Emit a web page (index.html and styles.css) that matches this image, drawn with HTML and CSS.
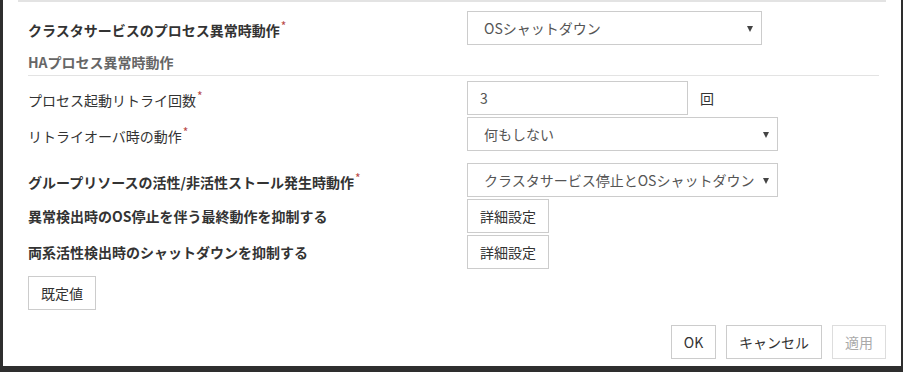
FILE: index.html
```html
<!DOCTYPE html>
<html lang="ja">
<head>
    <meta charset="UTF-8">
    <title>クラスタプロパティ - 監視</title>
    <link rel="stylesheet" href="styles.css">
</head>
<body>
    <div class="dialog">
        <div class="top-rule"></div>

        <div class="form">
            <div class="row">
                <label class="label bold">クラスタサービスのプロセス異常時動作<span class="req">*</span></label>
                <div class="select-wrap w295">
                    <select class="select">
                        <option>OSシャットダウン</option>
                    </select>
                </div>
            </div>

            <div class="section-title">HAプロセス異常時動作</div>

            <div class="row gap-sm">
                <label class="label">プロセス起動リトライ回数<span class="req">*</span></label>
                <div class="control-line">
                    <input class="input" type="text" value="3">
                    <span class="unit">回</span>
                </div>
            </div>

            <div class="row gap-lg">
                <label class="label">リトライオーバ時の動作<span class="req">*</span></label>
                <div class="select-wrap w311">
                    <select class="select">
                        <option>何もしない</option>
                    </select>
                </div>
            </div>

            <div class="row gap-sm">
                <label class="label bold">グループリソースの活性/非活性ストール発生時動作<span class="req">*</span></label>
                <div class="select-wrap w311">
                    <select class="select">
                        <option>クラスタサービス停止とOSシャットダウン</option>
                    </select>
                </div>
            </div>

            <div class="row gap-sm">
                <label class="label bold">異常検出時のOS停止を伴う最終動作を抑制する</label>
                <div><button class="btn detail">詳細設定</button></div>
            </div>

            <div class="row">
                <label class="label bold">両系活性検出時のシャットダウンを抑制する</label>
                <div><button class="btn detail">詳細設定</button></div>
            </div>

            <div class="defaults">
                <button class="btn">既定値</button>
            </div>
        </div>

        <div class="actions">
            <button class="btn ok">OK</button>
            <button class="btn">キャンセル</button>
            <button class="btn" disabled>適用</button>
        </div>
    </div>
</body>
</html>
```

FILE: styles.css
```css
:root {
    --text: #333;
    --muted: #666;
    --border: #ccc;
    --rule: #e3e3e3;
}

body {
    margin: 0;
    background: #2e2e2e;
    font-family: "Noto Sans CJK JP", "Noto Sans", sans-serif;
    font-size: 14px;
    color: var(--text);
}

.dialog {
    margin-left: 3px;
    width: 898px;
    height: 366px;
    background: white;
    position: relative;
}

.top-rule {
    margin: 0 15px;
    height: 2px;
    background: var(--rule);
}

.form {
    padding: 9px 0 0 25px;
}

.row {
    display: grid;
    grid-template-columns: 439px auto;
    align-items: center;
    height: 34px;
}

.gap-sm {
    margin-bottom: 2px;
}

.gap-lg {
    margin-bottom: 12px;
}

.label {
    line-height: 20px;
}

.bold {
    font-weight: bold;
}

.req {
    color: #b94a48;
    font-size: 12px;
    font-weight: normal;
    vertical-align: 5px;
    margin-left: 1px;
}

.section-title {
    margin-right: 22px;
    padding: 7px 0 3px;
    line-height: 20px;
    font-weight: bold;
    color: var(--muted);
    border-bottom: 1px solid var(--rule);
    margin-bottom: 5px;
}

.select-wrap {
    position: relative;
    height: 34px;
}

.w295 { width: 295px; }
.w311 { width: 311px; }

.select-wrap::after {
    content: "";
    position: absolute;
    right: 9px;
    top: 15px;
    border-left: 3.5px solid transparent;
    border-right: 3.5px solid transparent;
    border-top: 6px solid #444;
}

.select {
    appearance: none;
    -webkit-appearance: none;
    box-sizing: border-box;
    width: 100%;
    height: 34px;
    padding: 0 20px 0 16px;
    border: 1px solid var(--border);
    border-radius: 0;
    background: white;
    font: inherit;
    color: #555;
}

.control-line {
    display: flex;
    align-items: center;
}

.input {
    box-sizing: border-box;
    width: 221px;
    height: 34px;
    padding: 0 12px;
    border: 1px solid var(--border);
    font: inherit;
    color: #555;
}

.unit {
    margin-left: 12px;
}

.btn {
    box-sizing: border-box;
    height: 34px;
    padding: 0 12px;
    border: 1px solid var(--border);
    border-radius: 0;
    background: white;
    font: inherit;
    color: var(--text);
}

.btn.detail {
    width: 82px;
    padding: 0;
}

.btn:disabled {
    color: #aaa;
    border-color: #ddd;
}

.defaults {
    margin-top: 7px;
}

.defaults .btn {
    width: 68px;
    padding: 0;
}

.actions {
    display: flex;
    justify-content: flex-end;
    gap: 10px;
    margin: 15px 15px 0 0;
}

.actions .btn.ok {
    width: 45px;
    padding: 0;
}
```
